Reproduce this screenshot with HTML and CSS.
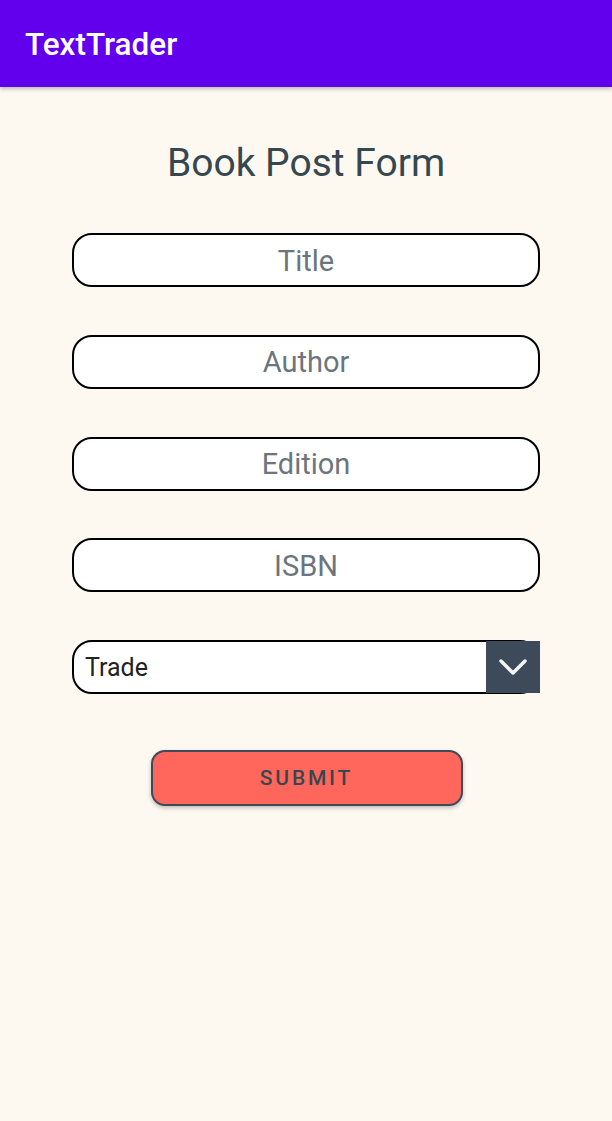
FILE: index.html
```html
<!DOCTYPE html>
<html>
<head>
<meta charset="utf-8">
<link rel="stylesheet" href="styles.css">
</head>
<body>
<header class="appbar"><span class="appbar-title">TextTrader</span></header>
<main class="content">
  <h1 class="heading">Book Post Form</h1>
  <form class="form">
    <div class="field"><span class="placeholder">Title</span></div>
    <div class="field"><span class="placeholder">Author</span></div>
    <div class="field"><span class="placeholder">Edition</span></div>
    <div class="field"><span class="placeholder">ISBN</span></div>
    <div class="field spinner">
      <span class="spinner-value">Trade</span>
      <span class="spinner-btn">
        <svg width="40" height="40" viewBox="0 0 40 40"><path d="M8 14 L20 26 L32 14" fill="none" stroke="#f4f4f4" stroke-width="3.5" stroke-linecap="round" stroke-linejoin="round"/></svg>
      </span>
    </div>
    <div class="submit-row"><button type="button" class="submit">SUBMIT</button></div>
  </form>
</main>
</body>
</html>
```
FILE: styles.css
```css
html, body {
  margin: 0;
  padding: 0;
}
body {
  background: #fdf9f1;
  font-family: Roboto, "Noto Sans", sans-serif;
  width: 612px;
  height: 1121px;
  overflow: hidden;
}
.appbar {
  height: 87px;
  background: #6200ee;
  display: flex;
  align-items: center;
  padding-left: 25px;
  box-shadow: 0 2px 4px rgba(0,0,0,0.25);
  position: relative;
}
.appbar-title {
  color: #fff;
  font-size: 31.5px;
  font-weight: 500;
  margin-top: 2px;
}
.content {
  display: flex;
  flex-direction: column;
  align-items: center;
}
.heading {
  margin: 43px 0 0 0;
  font-size: 39px;
  font-weight: 400;
  color: #37474f;
  line-height: 66px;
}
.form {
  margin-top: 37px;
  display: flex;
  flex-direction: column;
  gap: 47.75px;
  width: 468px;
}
.field {
  box-sizing: border-box;
  height: 54px;
  border: 2px solid #000;
  border-radius: 20px;
  background: #fff;
  display: flex;
  align-items: center;
  justify-content: center;
}
.placeholder {
  color: #6c757d;
  font-size: 29px;
  margin-top: 1px;
}
.spinner {
  justify-content: space-between;
  position: relative;
}
.spinner-value {
  color: #222;
  font-size: 25px;
  padding-left: 11px;
}
.spinner-btn {
  position: absolute;
  right: -2px;
  top: -1px;
  width: 54px;
  height: 52px;
  background: #3c4a59;
  display: flex;
  align-items: center;
  justify-content: center;
}
.submit-row {
  display: flex;
  justify-content: center;
  margin-top: 8px;
}
.submit {
  width: 312px;
  height: 56px;
  box-sizing: border-box;
  background: #ff675c;
  border: 2px solid #3c4a59;
  border-radius: 14px;
  color: #37474f;
  font-family: Roboto, sans-serif;
  font-size: 21px;
  font-weight: 500;
  letter-spacing: 2.8px;
  box-shadow: 0 2px 4px rgba(0,0,0,0.25);
  margin-left: 1px;
}
```
